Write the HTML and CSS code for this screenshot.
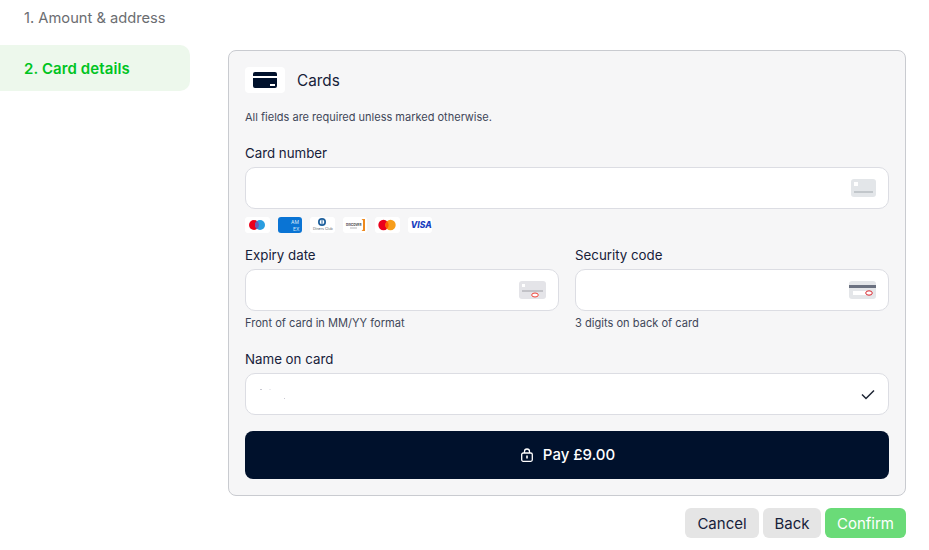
FILE: index.html
```html
<!DOCTYPE html>
<html lang="en">
<head>
<meta charset="utf-8">
<title>Card details</title>
<link rel="stylesheet" href="styles.css">
</head>
<body>
<div class="page">
  <nav class="steps">
    <div class="step">1. Amount &amp; address</div>
    <div class="step step-active">2. Card details</div>
  </nav>
  <main class="main">
    <section class="card">
      <header class="card-head">
        <span class="head-icon">
          <svg width="24" height="16" viewBox="0 0 24 16"><path fill="#00112c" fill-rule="evenodd" d="M2 0h20a2 2 0 0 1 2 2v2H0V2a2 2 0 0 1 2-2zM0 6h24v8a2 2 0 0 1-2 2H2a2 2 0 0 1-2-2zm17 6v2h5v-2z"/></svg>
        </span>
        <h1 class="card-title">Cards</h1>
      </header>
      <p class="note">All fields are required unless marked otherwise.</p>

      <div class="label label-first">Card number</div>
      <div class="input">
        <svg class="field-icon" width="25" height="18" viewBox="0 0 25 18"><rect width="25" height="18" rx="3" fill="#e3e6e9"/><rect x="3" y="3" width="4" height="4" fill="#fff"/><rect x="3" y="12" width="19" height="2" fill="#c2c7cb"/></svg>
      </div>
      <div class="brands">
        <span class="brand"><svg width="24" height="16" viewBox="0 0 24 16"><circle cx="9" cy="8" r="5" fill="#eb001b"/><circle cx="15" cy="8" r="5" fill="#2a9ee0"/><path d="M12 4a5 5 0 0 1 0 8 5 5 0 0 1 0-8z" fill="#6c5bb5"/></svg></span>
        <span class="brand brand-amex"><svg width="24" height="16" viewBox="0 0 24 16"><text class="amex-text" x="13" y="6.500">AM</text><text class="amex-text" x="15" y="13.500">EX</text></svg></span>
        <span class="brand"><svg width="24" height="16" viewBox="0 0 24 16"><circle cx="12" cy="5" r="4" fill="#1d5f9c"/><circle cx="12" cy="5" r="2.300" fill="#fff"/><path d="M11.500 3v4h1V3z" fill="#1d5f9c"/><text class="diners-text" x="3" y="13">Diners Club</text></svg></span>
        <span class="brand"><svg width="24" height="16" viewBox="0 0 24 16"><text class="discover-text" x="3" y="9">DISCOVER</text><path d="M7 11h7" stroke="#b5b7ba" stroke-width="1"/><path d="M18.500 2h3.500v12h-3.500l1.500-1.500V3.500z" fill="#ee8a1f"/></svg></span>
        <span class="brand"><svg width="24" height="16" viewBox="0 0 24 16"><circle cx="8.500" cy="8" r="5.200" fill="#eb001b"/><circle cx="15.500" cy="8" r="5.200" fill="#f79e1b"/><path d="M12 4.200a5.200 5.200 0 0 1 0 7.600 5.200 5.200 0 0 1 0-7.600z" fill="#ff5f00"/></svg></span>
        <span class="brand brand-visa">VISA</span>
      </div>

      <div class="row">
        <div class="col">
          <div class="label">Expiry date</div>
          <div class="input input-sm">
            <svg class="field-icon" width="27" height="18" viewBox="0 0 27 18"><rect width="27" height="18" rx="3" fill="#e4e4e8"/><rect x="3" y="3" width="3" height="3" fill="#fff"/><rect x="3" y="9" width="21" height="2" fill="#c2c2c7"/><ellipse cx="16" cy="14" rx="3.300" ry="2" fill="#fff" stroke="#ef4136" stroke-width="1"/></svg>
          </div>
          <div class="hint">Front of card in MM/YY format</div>
        </div>
        <div class="col">
          <div class="label">Security code</div>
          <div class="input input-sm">
            <svg class="field-icon" width="27" height="18" viewBox="0 0 27 18"><rect width="27" height="18" rx="3" fill="#e4e6e9"/><rect y="4" width="27" height="3" fill="#6b7180"/><rect x="4" y="10" width="16" height="4" fill="#fff"/><ellipse cx="20" cy="12" rx="3.300" ry="2.200" fill="#fff" stroke="#d8232a" stroke-width="1"/></svg>
          </div>
          <div class="hint">3 digits on back of card</div>
        </div>
      </div>

      <div class="label label-name">Name on card</div>
      <div class="input">
        <svg class="specks" width="30" height="12" viewBox="0 0 30 12"><rect x="0" y="1" width="2" height="1" fill="#c9c9d2"/><rect x="9" y="1" width="2" height="1" fill="#ececf0"/><rect x="24" y="10" width="1" height="1" fill="#c9c9d2"/></svg>
        <svg class="check" width="14" height="11" viewBox="0 0 14 11"><path d="M1 5.500l4 4 8-8" fill="none" stroke="#1d2433" stroke-width="1.500"/></svg>
      </div>

      <button class="pay" type="button">
        <svg width="12" height="14" viewBox="0 0 12 14"><path d="M3.500 5V3.500a2.500 2.500 0 0 1 5 0V5" fill="none" stroke="#fff" stroke-width="1.300"/><rect x=".7" y="5" width="10.600" height="8.300" rx="1.500" fill="none" stroke="#fff" stroke-width="1.300"/><rect x="5.200" y="7.500" width="1.600" height="3" fill="#fff"/></svg>
        <span class="pay-text">Pay £9.00</span>
      </button>
    </section>
    <div class="actions">
      <button class="btn btn-cancel" type="button">Cancel</button>
      <button class="btn btn-back" type="button">Back</button>
      <button class="btn btn-confirm" type="button">Confirm</button>
    </div>
  </main>
</div>
</body>
</html>
```
FILE: styles.css
```css
* { box-sizing: border-box; }
html, body { margin: 0; padding: 0; background: #fff; }
body { font-family: "Inter", "Liberation Sans", sans-serif; color: #1d2433; width: 929px; height: 550px; overflow: hidden; }
.page { display: flex; gap: 38px; padding-right: 23px; }

.steps { width: 190px; flex: none; display: flex; flex-direction: column; }
.step { font-size: 14.700px; line-height: 18px; color: #6b6d71; padding: 9px 0 0 24px; height: 45px; white-space: nowrap; }
.step-active { font-size: 15px; height: 46px; padding: 15px 0 0 24px; background: #edf8ec; border-radius: 0 10px 10px 0; color: #00c41f; font-weight: 600; letter-spacing: .1px; }

.main { flex: 1; padding-top: 50px; }
.card { height: 446px; border: 1px solid #c9cbd0; border-radius: 8px; background: #f6f6f7; padding: 16px; display: flex; flex-direction: column; }
.card-head { display: flex; align-items: center; gap: 12px; height: 26px; }
.head-icon { width: 40px; height: 26px; background: #fff; border-radius: 4px; display: flex; align-items: center; justify-content: center; }
.card-title { margin: 0; font-size: 15.300px; font-weight: 400; color: #17213a; }
.note { margin: 17px 0 0; font-size: 11px; line-height: 14px; color: #3f4759; }

.label { font-size: 13.300px; line-height: 16px; color: #17213a; }
.label-first { margin-top: 21px; margin-bottom: 6px; }
.input { height: 42px; background: #fff; border: 1px solid #dcdde3; border-radius: 10px; display: flex; align-items: center; justify-content: flex-end; padding-right: 12px; }
.input-sm { margin-top: 6px; }
.field-icon { display: block; }
.specks { margin-left: 14px; margin-right: auto; }
.check { margin-right: 1px; }

.brands { display: flex; gap: 8px; margin-top: 8px; height: 16px; }
.brand { width: 24.500px; height: 16px; border-radius: 3px; background: #fff; display: flex; align-items: center; justify-content: center; }
.brand-amex { background: #0a74d4; }
.amex-text { font-size: 5px; fill: #d6e8f8; font-family: "Inter", sans-serif; }
.diners-text { font-size: 3.600px; fill: #5d6268; font-family: "Inter", sans-serif; }
.discover-text { font-size: 3px; font-weight: 700; fill: #3d4045; font-family: "Inter", sans-serif; }
.brand-visa { font-size: 8.500px; font-weight: 800; font-style: italic; color: #1a3fc0; padding-left: 3px; }

.row { display: flex; gap: 16px; margin-top: 14px; }
.col { flex: 1; }
.hint { margin-top: 5px; font-size: 11.100px; line-height: 14px; color: #3f4759; }
.label-name { margin-top: 21px; margin-bottom: 6px; }

.pay { margin-top: 16px; height: 48px; width: 100%; border: 0; border-radius: 8px; background: #00112c; color: #fff; font: 500 15px "Inter", sans-serif; display: flex; align-items: center; justify-content: center; gap: 10px; padding: 0 0 0 2px; }
.pay-text { padding-bottom: 2px; }

.actions { display: flex; justify-content: flex-end; gap: 4px; margin-top: 12px; }
.btn { height: 30px; border: 0; border-radius: 6px; font: 400 15px "Inter", sans-serif; color: #17213a; background: #e5e5e5; padding: 0; }
.btn-cancel { width: 74px; }
.btn-back { width: 58px; }
.btn-confirm { width: 81px; background: #6adb78; color: #fff; }
```
